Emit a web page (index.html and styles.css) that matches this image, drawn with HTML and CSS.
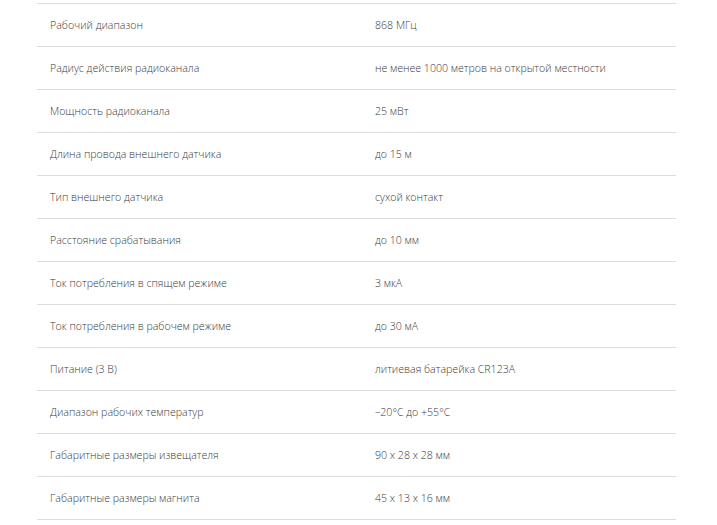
FILE: index.html
```html
<!DOCTYPE html>
<html lang="ru">
<head>
<meta charset="utf-8">
<title>Характеристики</title>
<link rel="stylesheet" href="styles.css">
</head>
<body>
<div class="specs">
  <div class="row"><div class="cell">Рабочий диапазон</div><div class="cell">868 МГц</div></div>
  <div class="row"><div class="cell">Радиус действия радиоканала</div><div class="cell">не менее 1000 метров на открытой местности</div></div>
  <div class="row"><div class="cell">Мощность радиоканала</div><div class="cell">25 мВт</div></div>
  <div class="row"><div class="cell">Длина провода внешнего датчика</div><div class="cell">до 15 м</div></div>
  <div class="row"><div class="cell">Тип внешнего датчика</div><div class="cell">сухой контакт</div></div>
  <div class="row"><div class="cell">Расстояние срабатывания</div><div class="cell">до 10 мм</div></div>
  <div class="row"><div class="cell">Ток потребления в спящем режиме</div><div class="cell">3 мкА</div></div>
  <div class="row"><div class="cell">Ток потребления в рабочем режиме</div><div class="cell">до 30 мА</div></div>
  <div class="row"><div class="cell">Питание (3 В)</div><div class="cell">литиевая батарейка CR123A</div></div>
  <div class="row"><div class="cell">Диапазон рабочих температур</div><div class="cell">–20°C до +55°C</div></div>
  <div class="row"><div class="cell">Габаритные размеры извещателя</div><div class="cell">90 x 28 x 28 мм</div></div>
  <div class="row"><div class="cell">Габаритные размеры магнита</div><div class="cell">45 x 13 x 16 мм</div></div>
</div>
</body>
</html>
```
FILE: styles.css
```css
html, body {
  margin: 0;
  padding: 0;
  background: #ffffff;
}
body {
  font-family: "Open Sans", "Liberation Sans", sans-serif;
  font-size: 10.6px;
  font-weight: 300;
  color: #3a3a3a;
}
.specs {
  width: 639px;
  margin: 3px 0 0 37px;
  border-bottom: 1px solid #dcdcdc;
}
.row {
  display: grid;
  grid-template-columns: 325px 1fr;
  height: 42px;
  border-top: 1px solid #dcdcdc;
}
.cell {
  display: flex;
  align-items: center;
  padding: 0 13px;
  white-space: nowrap;
}
```
